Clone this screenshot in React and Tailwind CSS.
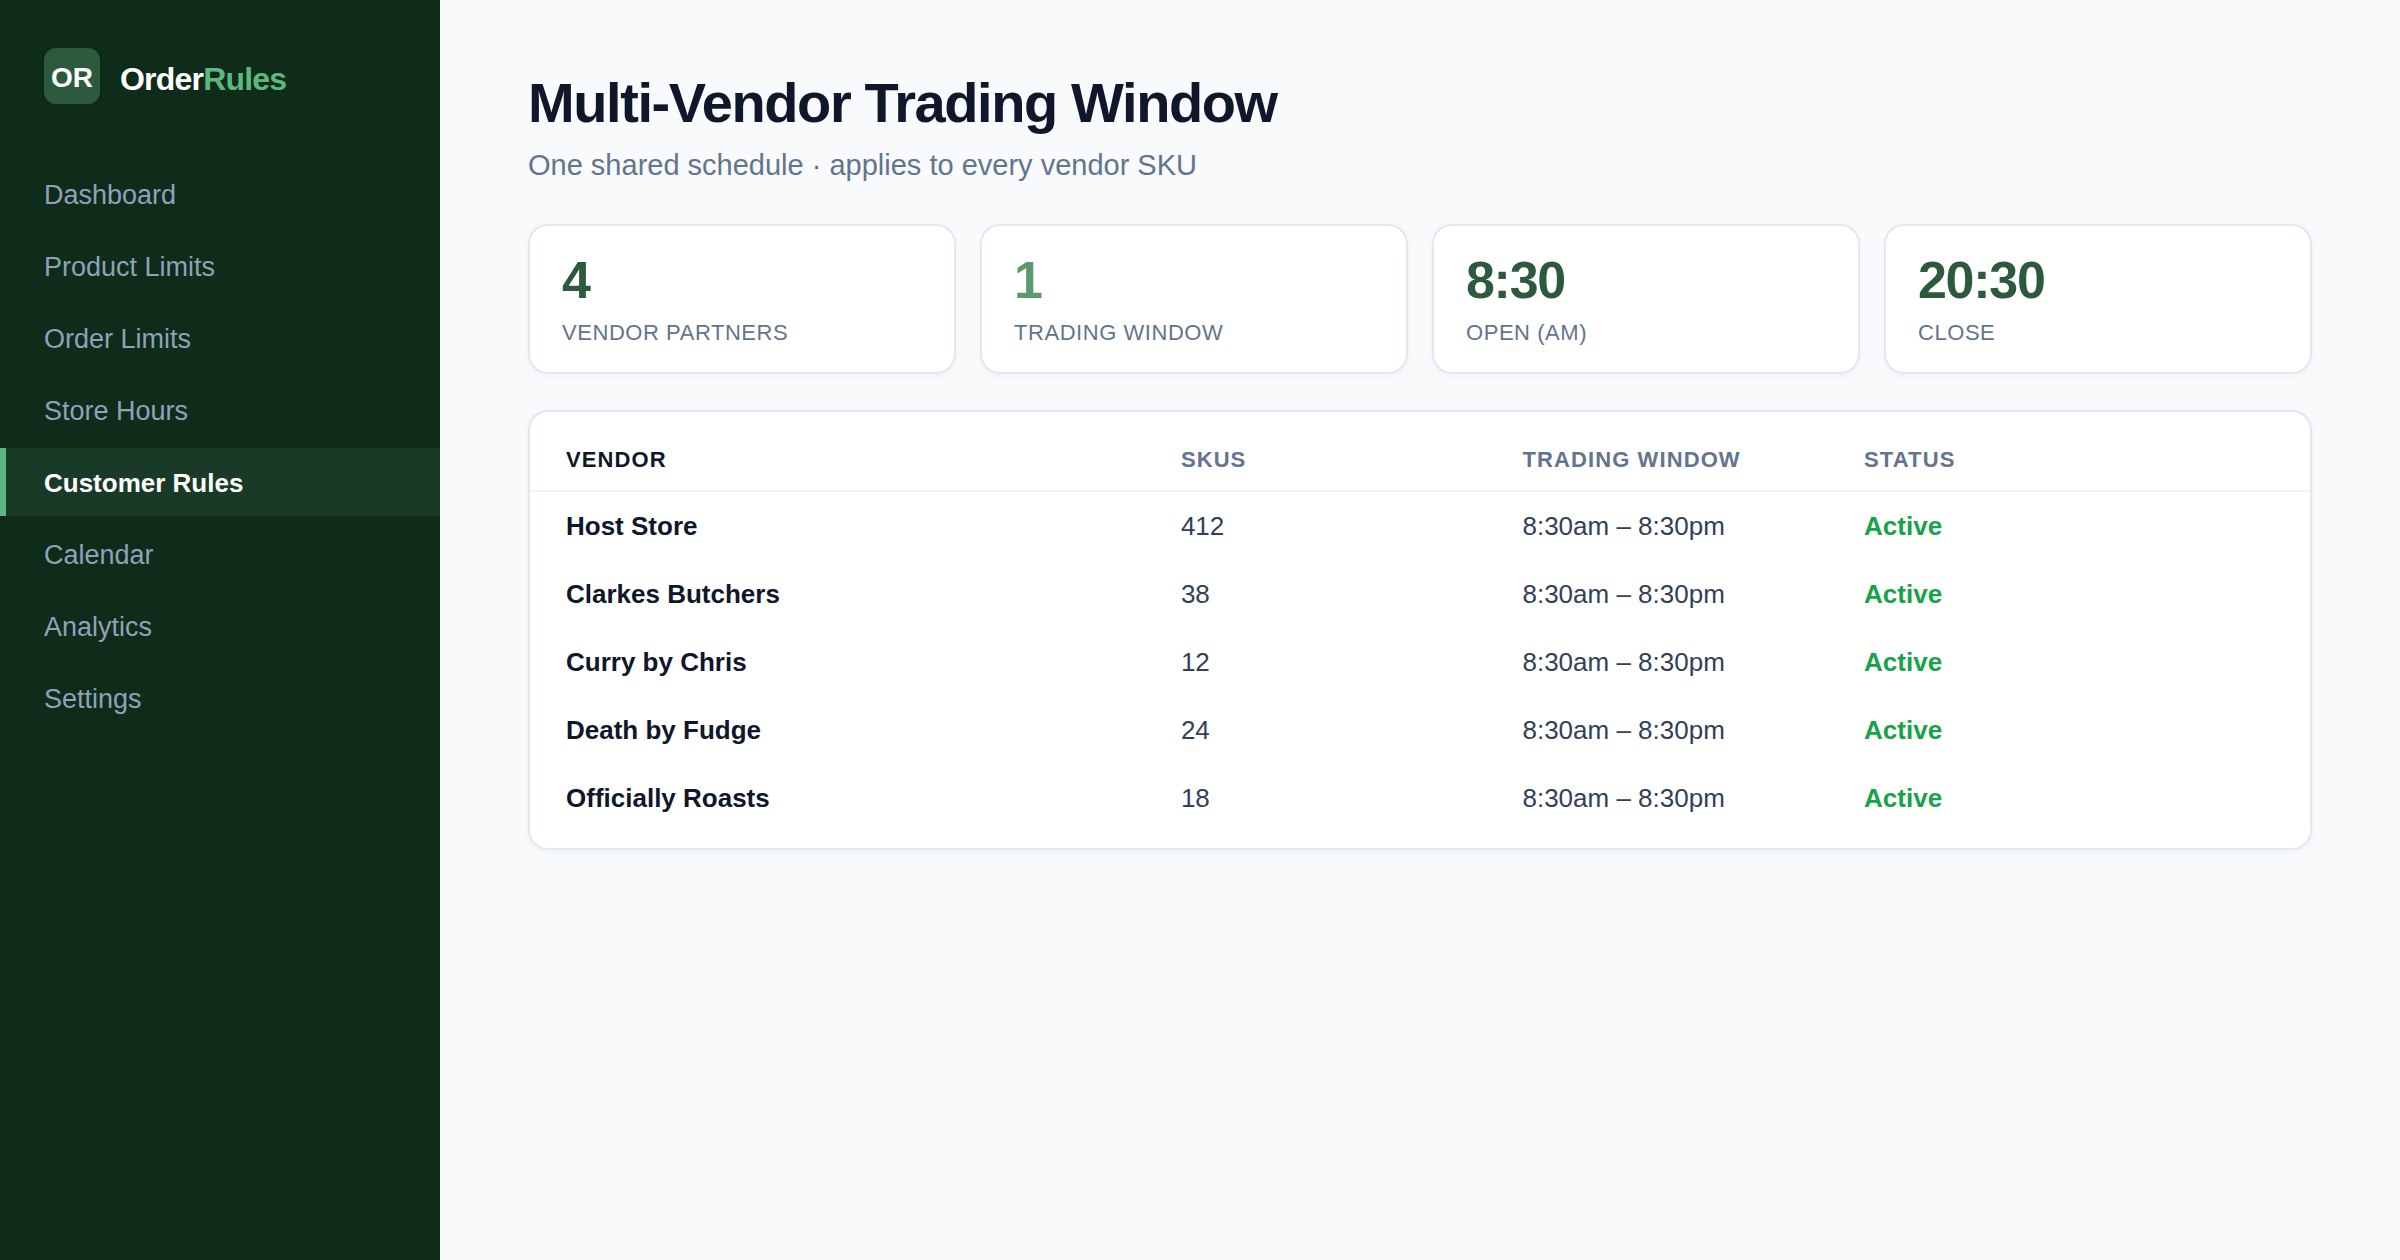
const NAV_ITEMS = [
  'Dashboard',
  'Product Limits',
  'Order Limits',
  'Store Hours',
  'Customer Rules',
  'Calendar',
  'Analytics',
  'Settings',
];

const STATS = [
  { value: '4', label: 'Vendor Partners', color: 'text-[#2d5a3d]' },
  { value: '1', label: 'Trading Window', color: 'text-[#5a9a6b]' },
  { value: '8:30', label: 'Open (AM)', color: 'text-[#2d5a3d]' },
  { value: '20:30', label: 'Close', color: 'text-[#2d5a3d]' },
];

const VENDORS = [
  { name: 'Host Store', skus: 412 },
  { name: 'Clarkes Butchers', skus: 38 },
  { name: 'Curry by Chris', skus: 12 },
  { name: 'Death by Fudge', skus: 24 },
  { name: 'Officially Roasts', skus: 18 },
];

// Header and body rows share the same column proportions
const ROW = 'grid grid-cols-[9fr_5fr_5fr_6fr] items-center px-9';

function Sidebar({ active }) {
  return (
    <aside className="w-[440px] shrink-0 bg-[#0f2b1a] pt-12">
      <div className="flex items-center gap-5 px-11">
        <div className="flex size-14 items-center justify-center rounded-xl bg-[#2d5a3d] pt-1 text-[28px] font-bold text-white">
          OR
        </div>
        <div className="pt-1.5 text-[32px] leading-10 font-bold tracking-tight text-white">
          Order<span className="text-[#5cb87e]">Rules</span>
        </div>
      </div>

      <nav className="mt-14 flex flex-col gap-1">
        {NAV_ITEMS.map((item) => (
          <a
            key={item}
            href="#"
            aria-current={item === active ? 'page' : undefined}
            className={
              item === active
                ? 'border-l-6 border-[#5cb87e] bg-[#1a3a28] pt-[17px] pb-[15px] pl-[38px] text-[26px] leading-9 font-bold text-white'
                : 'border-l-6 border-transparent pt-[17px] pb-[15px] pl-[38px] text-[27px] leading-9 font-medium text-slate-400'
            }
          >
            {item}
          </a>
        ))}
      </nav>
    </aside>
  );
}

function StatCard({ value, label, color }) {
  return (
    <div className="rounded-[20px] border-2 border-slate-200 bg-white px-8 pt-7 pb-[22px] shadow-[0_2px_6px_rgba(15,23,42,0.04)]">
      <div className={`text-[52px] leading-[52px] font-bold tracking-tight ${color}`}>{value}</div>
      <div className="mt-2.5 text-[22px] leading-[34px] font-medium tracking-wide text-slate-500 uppercase">
        {label}
      </div>
    </div>
  );
}

function VendorTable() {
  return (
    <div className="mt-9 rounded-[20px] border-2 border-slate-200 bg-white py-4 shadow-[0_2px_6px_rgba(15,23,42,0.04)]">
      <table className="block w-full text-left">
        <thead className="block">
          <tr
            className={`${ROW} h-16 border-b-2 border-slate-100 text-[22px] tracking-wider text-slate-500 uppercase`}
          >
            <th className="text-slate-900">Vendor</th>
            <th>SKUs</th>
            <th>Trading Window</th>
            <th>Status</th>
          </tr>
        </thead>
        <tbody className="block">
          {VENDORS.map((vendor) => (
            <tr key={vendor.name} className={`${ROW} h-17 text-[26px] leading-9 text-slate-700`}>
              <td className="font-bold text-slate-900">{vendor.name}</td>
              <td>{vendor.skus}</td>
              <td>8:30am – 8:30pm</td>
              <td className="font-bold text-[#16a34a]">Active</td>
            </tr>
          ))}
        </tbody>
      </table>
    </div>
  );
}

export default function App() {
  return (
    <div className="flex min-h-screen bg-slate-50 font-['Helvetica_Neue','Liberation_Sans',Arial,sans-serif]">
      <Sidebar active="Customer Rules" />
      <main className="min-w-0 flex-1 px-[88px] pt-[71px]">
        <h1 className="text-[56px] leading-16 font-bold tracking-tight text-slate-900">
          Multi-Vendor Trading Window
        </h1>
        <p className="mt-3 text-[29px] leading-9 font-medium text-slate-500">
          One shared schedule · applies to every vendor SKU
        </p>
        <section className="mt-[41px] grid grid-cols-4 gap-6">
          {STATS.map((stat) => (
            <StatCard key={stat.label} {...stat} />
          ))}
        </section>
        <VendorTable />
      </main>
    </div>
  );
}
